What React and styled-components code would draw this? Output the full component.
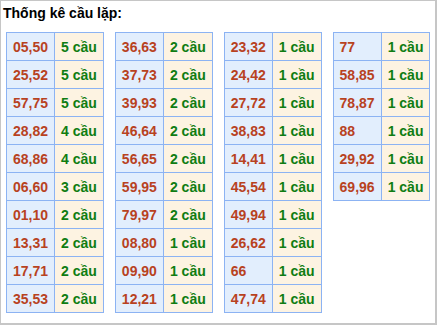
import React from 'react';
import styled, { createGlobalStyle } from 'styled-components';

const GlobalStyle = createGlobalStyle`
  body {
    margin: 0;
    background: #fff;
    font-family: Arial, 'Liberation Sans', sans-serif;
  }
`;

const Box = styled.div`
  box-sizing: border-box;
  width: 437px;
  height: 325px;
  border: 1px solid #c6c6c6;
  border-right-width: 2px;
  border-bottom-width: 2px;
  padding: 4px 0 0 5px;
`;

const Title = styled.h3`
  margin: 0 0 0 -3px;
  font-size: 14px;
  font-weight: bold;
  color: #000;
  line-height: 17px;
`;

const Tables = styled.div`
  display: flex;
  align-items: flex-start;
  gap: 11px;
  margin-top: 10px;
`;

const Table = styled.table`
  border-collapse: collapse;
  font-size: 14px;
  font-weight: bold;
`;

const Cell = styled.td`
  height: 27px;
  padding: 0 6px;
  border: 1px solid #8cb3f3;
  white-space: nowrap;
  background: ${({ $count }) => ($count ? '#fdf3e2' : '#e2eefd')};
  color: ${({ $count }) => ($count ? '#0f7d12' : '#b8421f')};
`;

const columns = [
  [
    ['05,50', 5], ['25,52', 5], ['57,75', 5], ['28,82', 4], ['68,86', 4],
    ['06,60', 3], ['01,10', 2], ['13,31', 2], ['17,71', 2], ['35,53', 2],
  ],
  [
    ['36,63', 2], ['37,73', 2], ['39,93', 2], ['46,64', 2], ['56,65', 2],
    ['59,95', 2], ['79,97', 2], ['08,80', 1], ['09,90', 1], ['12,21', 1],
  ],
  [
    ['23,32', 1], ['24,42', 1], ['27,72', 1], ['38,83', 1], ['14,41', 1],
    ['45,54', 1], ['49,94', 1], ['26,62', 1], ['66', 1], ['47,74', 1],
  ],
  [
    ['77', 1], ['58,85', 1], ['78,87', 1], ['88', 1], ['29,92', 1], ['69,96', 1],
  ],
];

const App = () => (
  <>
    <GlobalStyle />
    <Box>
      <Title>Thống kê cầu lặp:</Title>
      <Tables>
        {columns.map((rows, i) => (
          <Table key={i}>
            <tbody>
              {rows.map(([pair, n]) => (
                <tr key={pair}>
                  <Cell>{pair}</Cell>
                  <Cell $count>{n} cầu</Cell>
                </tr>
              ))}
            </tbody>
          </Table>
        ))}
      </Tables>
    </Box>
  </>
);

export default App;
